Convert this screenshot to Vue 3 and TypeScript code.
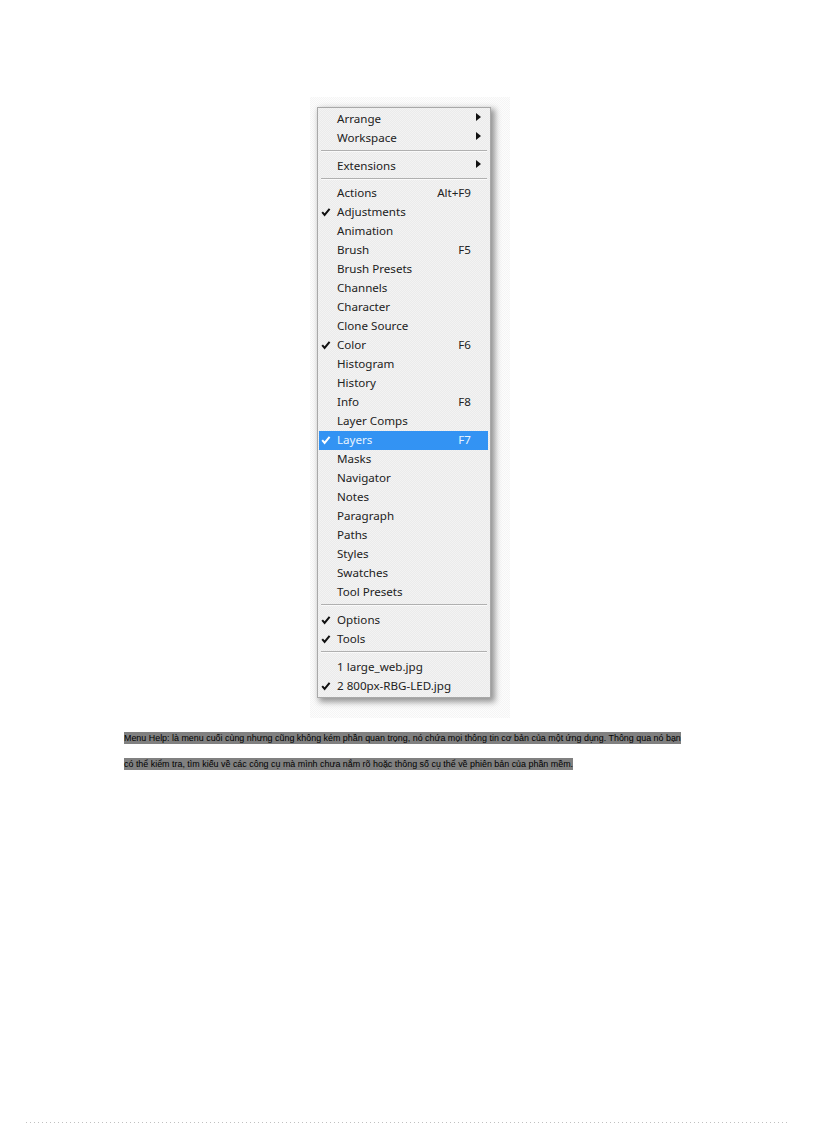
<script setup lang="ts">
type Item = { label?: string; key?: string; check?: boolean; arrow?: boolean; active?: boolean; sep?: boolean; tight?: boolean };

const names = (list: string): Item[] => list.split(",").map((label) => ({ label }));

const items: Item[] = [
  { label: "Arrange", arrow: true },
  { label: "Workspace", arrow: true },
  { sep: true },
  { label: "Extensions", arrow: true },
  { sep: true, tight: true },
  { label: "Actions", key: "Alt+F9" },
  { label: "Adjustments", check: true },
  { label: "Animation" },
  { label: "Brush", key: "F5" },
  ...names("Brush Presets,Channels,Character,Clone Source"),
  { label: "Color", key: "F6", check: true },
  ...names("Histogram,History"),
  { label: "Info", key: "F8" },
  { label: "Layer Comps" },
  { label: "Layers", key: "F7", check: true, active: true },
  ...names("Masks,Navigator,Notes,Paragraph,Paths,Styles,Swatches,Tool Presets"),
  { sep: true },
  { label: "Options", check: true },
  { label: "Tools", check: true },
  { sep: true },
  { label: "1 large_web.jpg" },
  { label: "2 800px-RBG-LED.jpg", check: true },
];
</script>

<template>
  <div class="page">
    <div class="shot">
      <div class="menu">
        <template v-for="(it, i) in items" :key="i">
          <div v-if="it.sep" class="sep" :class="{ tight: it.tight }"></div>
          <div v-else class="row" :class="{ active: it.active }">
            <span class="gutter">
              <svg v-if="it.check" width="10" height="10" viewBox="0 0 10 10">
                <path d="M1.2 5.2 L3.6 8 L8.6 1.8" fill="none" :stroke="it.active ? '#fff' : '#111'" stroke-width="2" />
              </svg>
            </span>
            <span class="label">{{ it.label }}</span>
            <span v-if="it.key" class="key">{{ it.key }}</span>
            <span v-if="it.arrow" class="arrow"></span>
          </div>
        </template>
      </div>
    </div>
    <div class="para">
      <p><mark>Menu Help: là menu cuối cùng nhưng cũng không kém phần quan trọng, nó chứa mọi thông tin cơ bản của một ứng dụng. Thông qua nó bạn</mark></p>
      <p><mark>có thể kiểm tra, tìm kiếu về các công cụ mà mình chưa nắm rõ hoặc thông số cụ thể về phiên bản của phần mềm.</mark></p>
    </div>
    <div class="dots"></div>
  </div>
</template>

<style>
html, body { margin: 0; background: #fff; }
</style>

<style scoped>
.page {
  width: 816px;
  height: 1123px;
  box-sizing: border-box;
  padding-top: 97px;
  display: flex;
  flex-direction: column;
  align-items: flex-start;
  overflow: hidden;
  background: #fff;
}
.shot {
  width: 200px;
  height: 621px;
  margin-left: 310px;
  padding: 10px 0 0 7px;
  box-sizing: border-box;
  background: repeating-conic-gradient(#f5f5f5 0 25%, #fdfdfd 0 50%) 0 0 / 2px 2px;
}
.menu {
  width: 174px;
  height: 591px;
  box-sizing: border-box;
  padding: 2px 2px 1px 1px;
  background: repeating-conic-gradient(#ebebeb 0 25%, #f3f3f3 0 50%) 0 0 / 2px 2px;
  border: 1px solid #a8a8a8;
  box-shadow: 3px 3px 6px 1px #949494;
  font-family: "Noto Sans", sans-serif;
  font-size: 11.6px;
  color: #222;
}
.row {
  height: 19px;
  box-sizing: border-box;
  padding-bottom: 2px;
  display: flex;
  align-items: center;
}
.row.active {
  background: #3393f3;
  color: #e8f3ff;
}
.gutter {
  width: 18px;
  flex: none;
  display: flex;
  padding-left: 2px;
  box-sizing: border-box;
}
.label { flex: 1; white-space: nowrap; }
.key { margin-right: 17px; }
.arrow {
  width: 0;
  height: 0;
  margin: 0 7px 4px 0;
  border-left: 5px solid #111;
  border-top: 4px solid transparent;
  border-bottom: 4px solid transparent;
}
.sep {
  height: 1px;
  margin: 2px 1px 5px 2px;
  background: #b0b0b0;
  border-bottom: 1px solid #fafafa;
}
.sep.tight {
  margin-bottom: 4px;
}
.para {
  margin: 14px 0 0 124px;
  width: 600px;
  font-family: "Liberation Sans", sans-serif;
  font-size: 8.92px;
  color: #000;
}
.para p {
  margin: 0 0 14px;
  line-height: 12px;
  height: 12px;
  white-space: nowrap;
}
.para mark {
  background: #808080;
  color: #000;
  padding: 1px 0;
}
.dots {
  width: 764px;
  height: 1px;
  margin: auto 0 0 26px;
  background: repeating-linear-gradient(90deg, #c0c0c0 0 1px, transparent 1px 4px);
}
</style>
